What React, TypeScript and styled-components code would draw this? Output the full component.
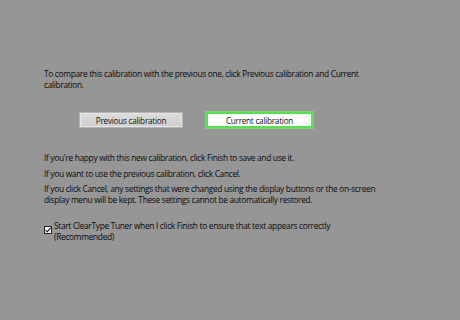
import React from "react";
import styled, { createGlobalStyle } from "styled-components";

const GlobalStyle = createGlobalStyle`
  html, body {
    margin: 0;
    padding: 0;
    background: #969696;
  }
`;

const Page = styled.div`
  width: 460px;
  height: 320px;
  box-sizing: border-box;
  padding: 69px 0 0 44px;
  display: flex;
  flex-direction: column;
  font-family: "Open Sans", "Noto Sans", sans-serif;
  font-size: 8.4px;
  line-height: 10.5px;
  color: #0a0a0a;
  overflow: hidden;
`;

const Paragraph = styled.p<{ $gap?: number }>`
  margin: 0 0 ${({ $gap }) => $gap ?? 5}px 0;
  max-width: 340px;
  letter-spacing: -0.32px;
`;

const ButtonRow = styled.div`
  display: flex;
  gap: 23px;
  margin: 22px 0 25px 35px;
`;

const CalButton = styled.button<{ $active?: boolean }>`
  box-sizing: border-box;
  height: 16px;
  width: ${({ $active }) => ($active ? 107 : 104)}px;
  padding: 0;
  font-family: inherit;
  font-size: 8.2px;
  letter-spacing: -0.25px;
  color: #111;
  border: ${({ $active }) => ($active ? "2px solid #55e04f" : "1px solid #b4b4b4")};
  background: ${({ $active }) =>
    $active ? "#fdfdfd" : "linear-gradient(#dcdcdc, #cfcfcf)"};
  box-shadow: ${({ $active }) =>
    $active ? "0 0 0 1px #7bd46f" : "inset 0 0 0 1px #e6e6e6"};
  display: flex;
  align-items: center;
  justify-content: center;
`;

const CheckRow = styled.label`
  display: flex;
  align-items: flex-start;
  gap: 2px;
  margin-top: 16px;
`;

const Box = styled.span`
  box-sizing: border-box;
  width: 8px;
  height: 8px;
  margin-top: 5px;
  flex: none;
  background: #f4f4f4;
  border: 1px solid #222;
  display: flex;
  align-items: center;
  justify-content: center;
`;

const CheckText = styled.span`
  letter-spacing: -0.32px;
`;

const App = () => {
  return (
    <>
      <GlobalStyle />
      <Page>
        <Paragraph $gap={0}>
          To compare this calibration with the previous one, click Previous calibration and Current
          calibration.
        </Paragraph>
        <ButtonRow>
          <CalButton>Previous calibration</CalButton>
          <CalButton $active>Current calibration</CalButton>
        </ButtonRow>
        <Paragraph>If you're happy with this new calibration, click Finish to save and use it.</Paragraph>
        <Paragraph>If you want to use the previous calibration, click Cancel.</Paragraph>
        <Paragraph $gap={0}>
          If you click Cancel, any settings that were changed using the display buttons or the on-screen
          display menu will be kept. These settings cannot be automatically restored.
        </Paragraph>
        <CheckRow>
          <Box>
            <svg width="6" height="6" viewBox="0 0 6 6">
              <path d="M0.6 3.2 L2.3 4.8 L5.6 0.8" fill="none" stroke="#111" strokeWidth="1.1" />
            </svg>
          </Box>
          <CheckText>
            Start ClearType Tuner when I click Finish to ensure that text appears correctly
            <br />
            (Recommended)
          </CheckText>
        </CheckRow>
      </Page>
    </>
  );
};

export default App;
